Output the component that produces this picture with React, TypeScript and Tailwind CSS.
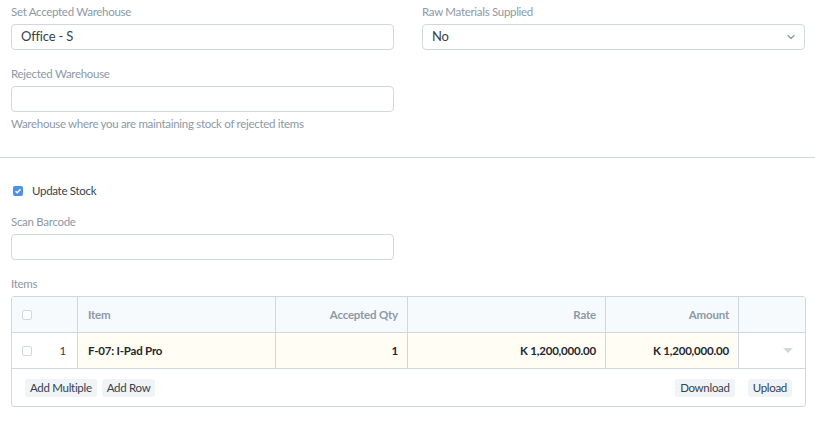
import { ChevronDown } from 'lucide-react'

const font = { fontFamily: 'Lato, "Noto Sans", sans-serif' }

const Label = ({ children }: { children: React.ReactNode }) => (
  <div className="text-[11.5px] tracking-[-0.3px] leading-[16px] text-[#8d99a6] mb-[4px]">{children}</div>
)

const Input = ({ value }: { value?: string }) => (
  <div className="h-[26px] border border-[#d1d8dd] rounded-[4px] bg-white px-[9px] flex items-center text-[13px] tracking-[-0.2px] text-[#36414c]">
    {value}
  </div>
)

const Box = ({ checked }: { checked?: boolean }) =>
  checked ? (
    <div className="w-[10px] h-[10px] rounded-[2px] bg-[#4f8fe8] flex items-center justify-center">
      <svg width="8" height="8" viewBox="0 0 8 8">
        <path d="M1.5 4.2 L3.2 5.8 L6.5 2.2" fill="none" stroke="white" strokeWidth="1.4" />
      </svg>
    </div>
  ) : (
    <div className="w-[10px] h-[10px] rounded-[2px] border border-[#d1d8dd] bg-white" />
  )

const SmallBtn = ({ children }: { children: React.ReactNode }) => (
  <div className="h-[18px] px-[5px] rounded-[3px] bg-[#f0f4f7] text-[11.5px] tracking-[-0.3px] text-[#36414c] flex items-center">
    {children}
  </div>
)

export default function App() {
  return (
    <div className="w-[815px] h-[434px] bg-white overflow-hidden" style={font}>
      <div className="grid grid-cols-[383px_383px] gap-x-[28px] px-[11px] pt-[4px]">
        <div>
          <Label>Set Accepted Warehouse</Label>
          <Input value="Office - S" />
          <div className="mt-[16px]">
            <Label>Rejected Warehouse</Label>
            <Input />
          </div>
          <div className="text-[11.5px] tracking-[-0.3px] leading-[16px] text-[#8d99a6] mt-[4px]">
            Warehouse where you are maintaining stock of rejected items
          </div>
        </div>
        <div>
          <Label>Raw Materials Supplied</Label>
          <div className="h-[26px] border border-[#d1d8dd] rounded-[4px] bg-white pl-[9px] pr-[7px] flex items-center justify-between text-[13px] tracking-[-0.2px] text-[#36414c]">
            <span>No</span>
            <ChevronDown size={12} strokeWidth={2.5} className="text-[#8d99a6]" />
          </div>
        </div>
      </div>

      <div className="border-t border-[#d1d8dd] mt-[25px]" />

      <div className="px-[11px]">
        <div className="flex items-center gap-[9px] mt-[24px] pl-[2px]">
          <Box checked />
          <span className="text-[11.5px] tracking-[-0.3px] text-[#36414c]">Update Stock</span>
        </div>

        <div className="w-[383px] mt-[15px]">
          <Label>Scan Barcode</Label>
          <Input />
        </div>

        <div className="mt-[16px]">
          <Label>Items</Label>
        </div>

        <div className="border border-[#d1d8dd] rounded-[3px] w-[795px]">
          <div className="flex h-[36px] bg-[#f7fafc] border-b border-[#d1d8dd] text-[11.5px] tracking-[-0.2px] font-bold text-[#8d99a6]">
            <div className="w-[66px] border-r border-[#d1d8dd] flex items-center pl-[10px]">
              <Box />
            </div>
            <div className="w-[198px] border-r border-[#d1d8dd] flex items-center px-[10px]">Item</div>
            <div className="w-[132px] border-r border-[#d1d8dd] flex items-center justify-end px-[9px]">Accepted Qty</div>
            <div className="w-[198px] border-r border-[#d1d8dd] flex items-center justify-end px-[9px]">Rate</div>
            <div className="w-[133px] border-r border-[#d1d8dd] flex items-center justify-end px-[9px]">Amount</div>
            <div className="flex-1" />
          </div>
          <div className="flex h-[36px] border-b border-[#d1d8dd] text-[11.5px] tracking-[-0.2px] font-bold text-[#1f272e]">
            <div className="w-[66px] border-r border-[#d1d8dd] flex items-center justify-between pl-[10px] pr-[11px] bg-white">
              <Box />
              <span className="font-normal text-[#36414c]">1</span>
            </div>
            <div className="w-[198px] border-r border-[#d1d8dd] flex items-center px-[10px] bg-[#fffdf4]">F-07: I-Pad Pro</div>
            <div className="w-[132px] border-r border-[#d1d8dd] flex items-center justify-end px-[9px] bg-[#fffdf4]">1</div>
            <div className="w-[198px] border-r border-[#d1d8dd] flex items-center justify-end px-[9px] bg-[#fffdf4]">K 1,200,000.00</div>
            <div className="w-[133px] border-r border-[#d1d8dd] flex items-center justify-end px-[9px] bg-[#fffdf4]">K 1,200,000.00</div>
            <div className="flex-1 flex items-center justify-end pr-[12px] bg-white">
              <svg width="10" height="6" viewBox="0 0 10 6">
                <path d="M0 0 L10 0 L5 5 Z" fill="#d1d8dd" />
              </svg>
            </div>
          </div>
          <div className="h-[37px] flex items-center justify-between px-[13px]">
            <div className="flex gap-[5px]">
              <SmallBtn>Add Multiple</SmallBtn>
              <SmallBtn>Add Row</SmallBtn>
            </div>
            <div className="flex gap-[13px]">
              <SmallBtn>Download</SmallBtn>
              <SmallBtn>Upload</SmallBtn>
            </div>
          </div>
        </div>
      </div>
    </div>
  )
}
